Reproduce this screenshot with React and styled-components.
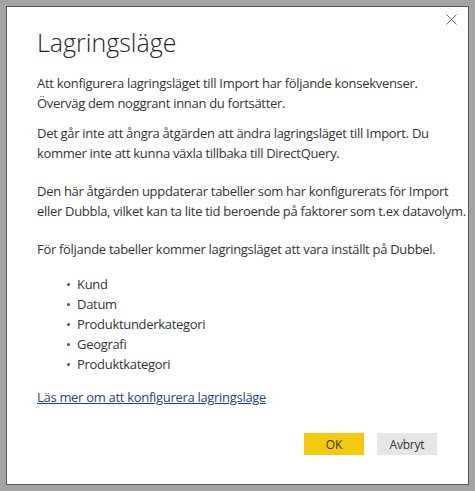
import React from 'react';
import styled, { createGlobalStyle } from 'styled-components';

const GlobalStyle = createGlobalStyle`
  html, body {
    margin: 0;
    padding: 0;
    background: #a4a4a4;
  }
  body {
    font-family: 'Open Sans', 'Noto Sans', sans-serif;
  }
`;

const Frame = styled.div`
  width: 475px;
  height: 491px;
  padding: 6px;
  box-sizing: border-box;
`;

const Dialog = styled.div`
  position: relative;
  width: 463px;
  height: 479px;
  box-sizing: border-box;
  background: #fff;
  border: 1px solid #555;
  padding: 18px 30px 0 30px;
  display: flex;
  flex-direction: column;
`;

const Close = styled.button`
  position: absolute;
  top: 0;
  right: 5px;
  width: 24px;
  height: 24px;
  border: 0;
  padding: 0;
  background: transparent;
  display: flex;
  align-items: center;
  justify-content: center;
`;

const Title = styled.h1`
  margin: 0 0 14px 0;
  font-family: 'Open Sans', sans-serif;
  font-weight: 300;
  font-size: 25px;
  line-height: 34px;
  color: #252423;
`;

const Para = styled.p`
  margin: 0 0 ${p => p.gap || 10}px 0;
  font-size: 13px;
  letter-spacing: -0.3px;
  line-height: 20px;
  color: #333;
  white-space: nowrap;
`;

const List = styled.ul`
  margin: 0 0 13px 0;
  padding: 0 0 0 30px;
  list-style: none;
`;

const Item = styled.li`
  font-size: 13px;
  letter-spacing: -0.3px;
  line-height: 20px;
  color: #333;
  display: flex;
  align-items: center;
  gap: 7px;
  &::before {
    content: '';
    width: 3px;
    height: 3px;
    border-radius: 50%;
    background: #555;
  }
`;

const Link = styled.a`
  font-size: 13px;
  letter-spacing: -0.3px;
  line-height: 20px;
  color: #1f3f8f;
  text-decoration: underline;
  align-self: flex-start;
`;

const Footer = styled.div`
  display: flex;
  justify-content: flex-end;
  gap: 13px;
  margin-top: 26px;
  margin-right: 1px;
`;

const Button = styled.button`
  width: 60px;
  height: 22px;
  border: 0;
  padding: 0;
  font-family: 'Open Sans', sans-serif;
  font-size: 12px;
  letter-spacing: -0.2px;
  color: #333;
  background: ${p => (p.primary ? '#f2c811' : '#e6e6e6')};
`;

const items = ['Kund', 'Datum', 'Produktunderkategori', 'Geografi', 'Produktkategori'];

const App = () => (
  <>
    <GlobalStyle />
    <Frame>
      <Dialog>
        <Close aria-label="Stäng">
          <svg width="11" height="11" viewBox="0 0 11 11">
            <path d="M0.5 0.5 L10.5 10.5 M10.5 0.5 L0.5 10.5" stroke="#666" strokeWidth="1" fill="none" />
          </svg>
        </Close>
        <Title>Lagringsläge</Title>
        <Para>
          Att konfigurera lagringsläget till Import har följande konsekvenser.
          <br />
          Överväg dem noggrant innan du fortsätter.
        </Para>
        <Para gap={18}>
          Det går inte att ångra åtgärden att ändra lagringsläget till Import. Du
          <br />
          kommer inte att kunna växla tillbaka till DirectQuery.
        </Para>
        <Para gap={18}>
          Den här åtgärden uppdaterar tabeller som har konfigurerats för Import
          <br />
          eller Dubbla, vilket kan ta lite tid beroende på faktorer som t.ex datavolym.
        </Para>
        <Para gap={15}>För följande tabeller kommer lagringsläget att vara inställt på Dubbel.</Para>
        <List>
          {items.map(item => (
            <Item key={item}>{item}</Item>
          ))}
        </List>
        <Link href="#">Läs mer om att konfigurera lagringsläge</Link>
        <Footer>
          <Button primary>OK</Button>
          <Button>Avbryt</Button>
        </Footer>
      </Dialog>
    </Frame>
  </>
);

export default App;
